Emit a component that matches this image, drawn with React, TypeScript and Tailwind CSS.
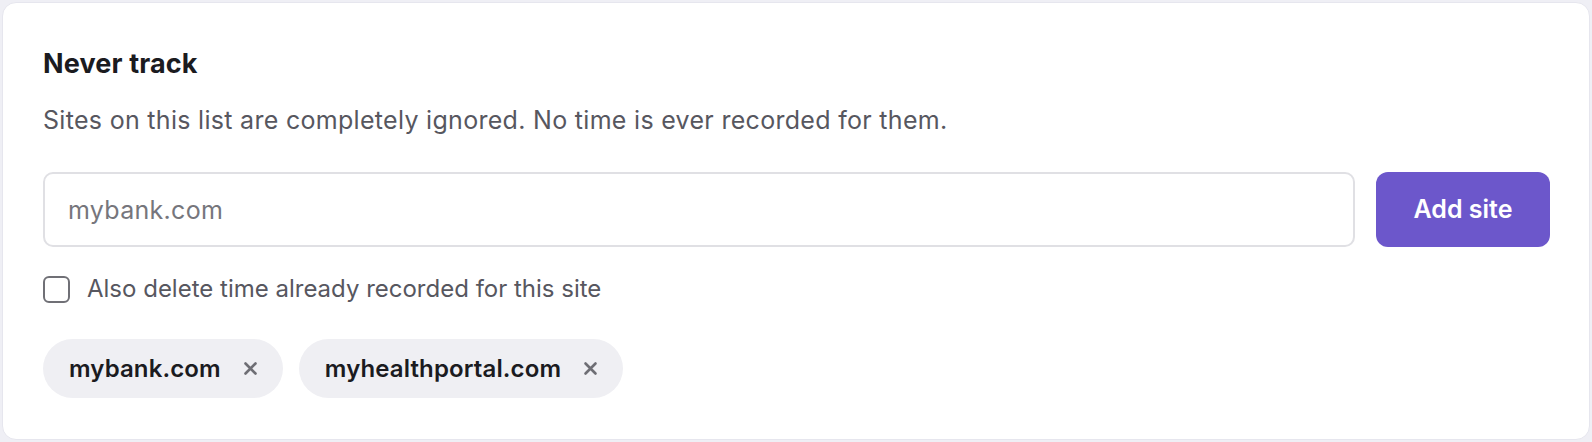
import { useState } from 'react';

const initialSites = ['mybank.com', 'myhealthportal.com'];

function CloseIcon() {
  return (
    <svg width="15" height="15" viewBox="0 0 15 15" aria-hidden="true">
      <path d="M2.5 2.5L12.5 12.5M12.5 2.5L2.5 12.5" stroke="currentColor" strokeWidth="2.6" strokeLinecap="round" />
    </svg>
  );
}

export default function App() {
  const [sites, setSites] = useState<string[]>(initialSites);
  const [value, setValue] = useState('');
  const [alsoDelete, setAlsoDelete] = useState(false);

  const addSite = () => {
    const v = value.trim();
    if (!v || sites.includes(v)) return;
    setSites([...sites, v]);
    setValue('');
  };

  return (
    <div className="min-h-screen bg-[#efeff5] p-[2px] font-['Inter',sans-serif]">
      <div className="rounded-[14px] border border-[#e6e6ee] bg-white pl-[40px] pr-[39px] pt-[45px] pb-[41px]">
        {/* Header */}
        <h2 className="text-[27px] leading-[32px] font-bold tracking-[0.005em] text-[#1b1b1f]">Never track</h2>
        <p className="mt-[24px] text-[25px] leading-[32px] tracking-[0.012em] text-[#57575f]">
          Sites on this list are completely ignored. No time is ever recorded for them.
        </p>

        {/* Add row */}
        <div className="mt-[36px] flex gap-[21px]">
          <input
            value={value}
            onChange={(e) => setValue(e.target.value)}
            placeholder="mybank.com"
            className="h-[75px] flex-1 rounded-[10px] border-2 border-[#e0e0e4] px-[23px] text-[25px] tracking-[0.012em] text-[#1b1b1f] placeholder:text-[#76767c] outline-none"
          />
          <button
            onClick={addSite}
            className="h-[75px] w-[174px] rounded-[12px] bg-[#6c57cb] text-[25px] font-semibold text-white"
          >
            Add site
          </button>
        </div>

        {/* Checkbox */}
        <label className="mt-[26px] flex items-center gap-[17px] cursor-pointer">
          <input
            type="checkbox"
            checked={alsoDelete}
            onChange={(e) => setAlsoDelete(e.target.checked)}
            className="sr-only"
          />
          <span className="h-[27px] w-[27px] rounded-[6px] border-2 border-[#707076] bg-white" />
          <span className="text-[24px] leading-[32px] text-[#57575f]">Also delete time already recorded for this site</span>
        </label>

        {/* Site chips */}
        <div className="mt-[34px] flex flex-wrap gap-[16px]">
          {sites.map((site) => (
            <span
              key={site}
              className="flex h-[59px] items-center gap-[22px] rounded-full bg-[#efeff3] pl-[26px] pr-[25px]"
            >
              <span className="text-[24px] font-semibold tracking-[0.005em] text-[#1b1b1f]">{site}</span>
              <button
                onClick={() => setSites(sites.filter((s) => s !== site))}
                className="text-[#6e6e74]"
                aria-label={`Remove ${site}`}
              >
                <CloseIcon />
              </button>
            </span>
          ))}
        </div>
      </div>
    </div>
  );
}
